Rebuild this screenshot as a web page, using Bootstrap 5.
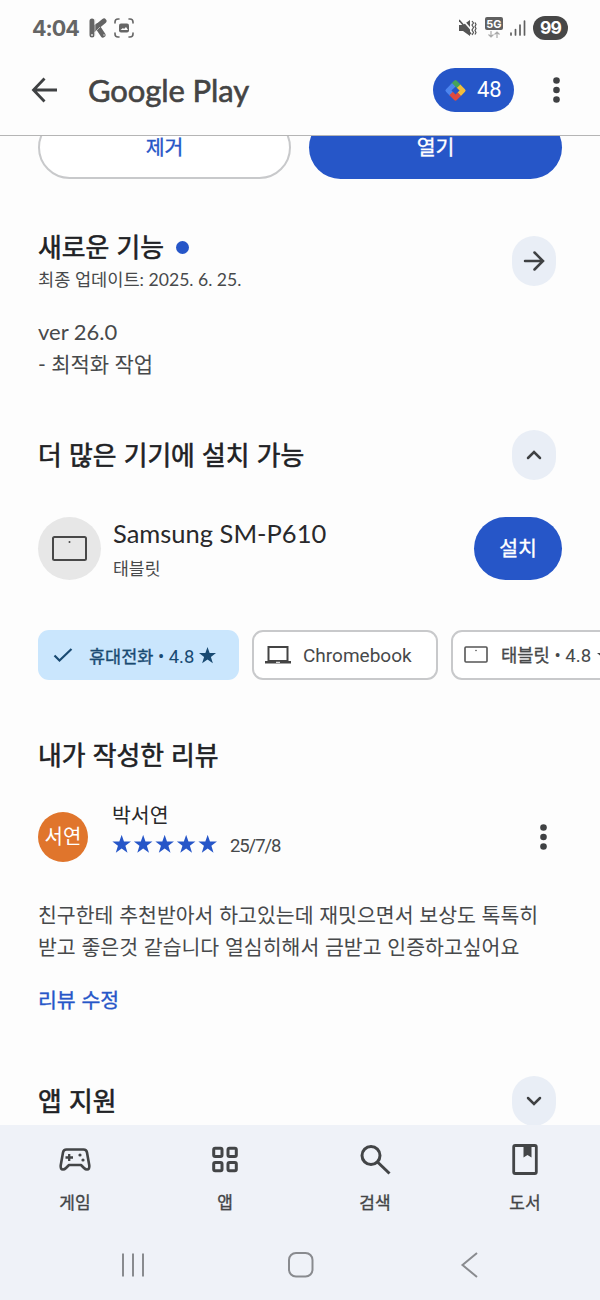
<!DOCTYPE html>
<html lang="ko">
<head>
<meta charset="utf-8">
<meta name="viewport" content="width=device-width, initial-scale=1">
<title>Google Play</title>
<link href="https://cdn.jsdelivr.net/npm/bootstrap@5.3.0/dist/css/bootstrap.min.css" rel="stylesheet">
<style>
  body { font-family: Roboto, "Noto Sans CJK KR", sans-serif; color: #47494b; background: #fdfdfd; height: 1300px; overflow: hidden; }
  .kr { font-family: "Noto Sans CJK KR", sans-serif; }
  .geo { font-family: Lato, "Noto Sans CJK KR", sans-serif; }
  svg { display: block; flex: none; }
  span, a, h1, h2, p { white-space: nowrap; }
  .status { height: 56px; padding: 0 32px; }
  .clock { font: 700 21.5px/30px Inter, sans-serif; color: #656565; letter-spacing: -1px; width: 57px; }
  .battery { width: 35px; height: 24px; background: #474747; font: 700 17.5px/24px Inter, sans-serif; letter-spacing: -.8px; margin-left: 7px; }
  .topbar { height: 80px; padding: 0 39px 11px 31px; border-bottom: 1.5px solid #b5b5b5; }
  .wordmark { font: 400 31px/40px Lato, sans-serif; letter-spacing: -.1px; color: #444; -webkit-text-stroke: .6px #444; width: 345px; margin-left: 31px; }
  .points { width: 81px; height: 44px; background: #2656c8; font-size: 22px; line-height: 44px; padding-left: 11px; }
  .content { height: 989px; padding: 0 38px; }
  .pill { height: 63px; border-radius: 32px; font-size: 20.5px; line-height: 60px; padding: 0 0 3px; border: 0; }
  .pill-outline { border: 2px solid #c8c9cb; color: #2656c8; -webkit-text-stroke: .35px; background: #fff; line-height: 56px; }
  .pill-blue { background: #2656c8; color: #fff; -webkit-text-stroke: .35px; }
  .heading { font-size: 25.8px; line-height: 32px; font-weight: 400; color: #202124; -webkit-text-stroke: .6px #202124; margin: 0; padding-bottom: 3px; }
  .fresh-dot { width: 13px; height: 13px; background: #2656c8; margin-left: 12px; }
  .round { width: 44px; height: 50px; border-radius: 22px; background: #e9eef6; margin-right: 6px; flex: none; }
  .body-text { font-size: 20.5px; line-height: 32px; margin: 0; }
  .device { width: 63px; height: 63px; background: #e7e7e7; }
  .chip { height: 50px; border: 2px solid #c8c9cb; border-radius: 11px; font-size: 19px; background: #fff; flex: none; }
  .chip > span { padding-top: 3px; }
  .chip-on { width: 201px; background: #cae6fd; color: #194a72; border: 0; padding-left: 15px; }
  .chips { margin: 50px -38px 0 0; gap: 13px; overflow: hidden; }
  .stroked { -webkit-text-stroke: .35px; }
  .avatar { width: 50px; height: 50px; background: #e0752c; font-size: 20px; line-height: 48px; }
  .bottom { height: 175px; background: #eff2f8; }
  .tab { padding-top: 17px; font-size: 17px; line-height: 24px; color: #434547; }
  .tab span { margin-top: 14px; }
  .sysnav { padding: 0 117px 0 119px; margin-top: 38px; }
</style>
</head>
<body>
<svg class="d-none"><defs>
  <path id="star" d="M12 2l2.500 7.200H22l-6 4.600 2.300 7.400-6.300-4.500-6.300 4.500L8 13.800 2 9.200h7.500z"/>
</defs></svg>

<header>
  <div class="status d-flex align-items-center justify-content-between">
    <div class="d-flex align-items-center">
      <span class="clock">4:04</span>
      <svg width="18" height="20" viewBox="0 0 18 20"><path d="M3 3v14M15 3L4 12M8 8l6 9" stroke="#646464" stroke-width="5" stroke-linecap="round"/><path d="M6 1v17M6 14l5-5" stroke="#ddd" stroke-width=".7"/><circle cx="3" cy="17" r="1" fill="#ddd"/><circle cx="15" cy="17" r=".8" fill="#ddd"/></svg>
      <svg style="margin-left:7px" width="20" height="20" viewBox="0 0 20 20" fill="none" stroke="#666" stroke-width="1.600" stroke-linecap="round"><path d="M1 5V4a3 3 0 013-3h1M15 1h1a3 3 0 013 3v1M19 15v1a3 3 0 01-3 3h-1M5 19H4a3 3 0 01-3-3v-1"/><rect x="5" y="5.500" width="10" height="9" rx="2" fill="#666" stroke="none"/><path d="M6.500 12l2.500-2 1 1 2-2 2 3z" fill="#fff" stroke="none"/></svg>
    </div>
    <div class="d-flex align-items-center">
      <svg width="18" height="18" viewBox="0 0 18 18"><path d="M0 6h4l7-5v16l-7-5H0z" fill="#555"/><path d="M2-1l14 16" stroke="#fdfdfd" stroke-width="1.600"/><path d="M0 1l12 14" stroke="#555" stroke-width="1.600"/><path d="M13 2l1.500 2L13 6l1.500 2.500L13 11l1.500 2.500L13 16M16 3.500l1 2-1 2 1 2-1 2 1 2-1 2" fill="none" stroke="#555" stroke-width="1.200"/></svg>
      <svg style="margin-left:7px" width="20" height="22" viewBox="0 0 20 22"><rect x="1" y="0" width="18" height="13" rx="2" fill="#606060"/><text x="10" y="10.500" text-anchor="middle" font-family="Inter" font-weight="700" font-size="11" fill="#fff">5G</text><path d="M7 14v6M4.500 17.500L7 20l2.500-2.500M13 21v-6M10.500 17.500L13 15l2.500 2.500" fill="none" stroke="#aaa" stroke-width="1.200"/></svg>
      <svg style="margin-left:5px" width="17" height="18" viewBox="0 0 17 18" stroke="#606060" stroke-width="1.700" stroke-linecap="round"><path d="M2 14v2M6.500 10.500V16M11 6v10M15.500 2v14"/></svg>
      <span class="battery rounded-pill text-white text-center">99</span>
    </div>
  </div>
  <div class="topbar d-flex align-items-center">
    <svg width="26" height="26" viewBox="0 0 26 26" fill="none" stroke="#3f4143" stroke-width="2.800"><path d="M13.500 1.500L2.500 13l11 11.500M2.500 13H26"/></svg>
    <span class="wordmark">Google Play</span>
    <div class="points rounded-pill text-white d-flex align-items-center">
      <svg width="23" height="23" viewBox="0 0 24 24"><g transform="rotate(45 12 12)"><path d="M4 6a2 2 0 012-2h8v5H9v3H4z" fill="#46a35a"/><path d="M4 9h5v6h3v5H6a2 2 0 01-2-2z" fill="#4c85ef"/><path d="M11 4h7a2 2 0 012 2v6h-5V9h-4z" fill="#f2bd3a"/><path d="M20 12v6a2 2 0 01-2 2h-7v-5h4v-3z" fill="#df4a3f"/><path d="M4 9V6a2 2 0 012-2h5v5z" fill="#46a35a"/></g></svg>
      <span style="margin-left:10px">48</span>
    </div>
    <svg style="margin-left:39px" width="7" height="26" viewBox="0 0 7 26" fill="#3f4143"><circle cx="3.500" cy="3.500" r="3.300"/><circle cx="3.500" cy="13" r="3.300"/><circle cx="3.500" cy="22.500" r="3.300"/></svg>
  </div>
</header>

<main class="content overflow-hidden">
  <div class="d-flex" style="margin-top:-20px;gap:18px">
    <button class="pill pill-outline kr flex-fill w-50">제거</button>
    <button class="pill pill-blue kr flex-fill w-50">열기</button>
  </div>

  <section class="d-flex justify-content-between" style="margin-top:52px">
    <div>
      <div class="d-flex align-items-center" style="height:33px"><h2 class="heading kr">새로운 기능</h2><i class="fresh-dot rounded-circle"></i></div>
      <span class="geo d-block" style="font-size:17.600px;line-height:32px">최종 업데이트: 2025. 6. 25.</span>
    </div>
    <a class="round d-flex align-items-center justify-content-center" style="margin-top:5px"><svg width="22" height="22" viewBox="0 0 22 22" fill="none" stroke="#3f4143" stroke-width="2.500" stroke-linecap="round"><path d="M2 11h17M11.500 2.500L20 11l-8.500 8.500"/></svg></a>
  </section>
  <p class="body-text geo" style="margin-top:20px;font-size:21px"><span style="font-size:22px">ver 26.0</span><br>- 최적화 작업</p>

  <section class="d-flex align-items-center justify-content-between" style="margin-top:50px">
    <h2 class="heading kr">더 많은 기기에 설치 가능</h2>
    <a class="round d-flex align-items-center justify-content-center"><svg width="16" height="10" viewBox="0 0 16 10" fill="none" stroke="#3f4143" stroke-width="2.500" stroke-linecap="round"><path d="M2 8l6-6 6 6"/></svg></a>
  </section>
  <div class="d-flex align-items-center" style="margin-top:37px;height:63px">
    <div class="device rounded-circle d-flex align-items-center justify-content-center"><svg width="36" height="26" viewBox="0 0 36 26"><rect x="1" y="1" width="33" height="23" rx="1.500" fill="none" stroke="#484848" stroke-width="2"/><circle cx="17.500" cy="6" r="1" fill="#484848"/></svg></div>
    <div class="flex-grow-1" style="margin-left:12px;padding-top:3px">
      <span class="geo d-block" style="font-size:25.500px;line-height:34px;color:#29292b">Samsung SM-P610</span>
      <span class="kr d-block" style="font-size:17.200px;line-height:35px">태블릿</span>
    </div>
    <button class="pill pill-blue kr" style="width:88px">설치</button>
  </div>

  <div class="chips d-flex">
    <div class="chip chip-on d-flex align-items-center">
      <svg width="20" height="16" viewBox="0 0 20 16" fill="none" stroke="#194a72" stroke-width="2.200"><path d="M1.500 8.500l5 5L18.500 2"/></svg>
      <span style="margin-left:16px;font-size:18.400px"><span class="stroked" style="font-size:17.500px">휴대전화</span> • 4.8</span>
      <svg style="margin-left:5px" width="17" height="17" viewBox="2 2 20 20" fill="#194a72"><use href="#star"/></svg>
    </div>
    <div class="chip d-flex align-items-center" style="width:186px;padding-left:11px">
      <svg width="26" height="20" viewBox="0 0 26 20"><rect x="3.500" y="2" width="19" height="14" fill="none" stroke="#444" stroke-width="2"/><path d="M0 16h26v2.500H0z" fill="#444"/><path d="M11 17.300h4" stroke="#fff"/></svg>
      <span style="margin-left:12px">Chromebook</span>
    </div>
    <div class="chip d-flex align-items-center" style="width:202px;padding-left:11px">
      <svg width="25" height="18" viewBox="0 0 25 18"><rect x="1" y="1" width="22" height="15" rx="1" fill="none" stroke="#555" stroke-width="1.600"/><circle cx="12" cy="4.500" r=".8" fill="#555"/></svg>
      <span style="margin-left:12px;font-size:18.600px"><span class="stroked" style="font-size:17.700px">태블릿</span> • 4.8</span>
      <svg style="margin-left:6px" width="17" height="17" viewBox="2 2 20 20" fill="#444"><use href="#star"/></svg>
    </div>
  </div>

  <h2 class="heading kr" style="margin-top:58px">내가 작성한 리뷰</h2>
  <div class="d-flex align-items-center" style="margin-top:25px;height:62px">
    <div class="avatar rounded-circle text-white text-center kr mt-3">서연</div>
    <div class="flex-grow-1" style="margin-left:24px">
      <span class="kr d-block" style="font-size:20.500px;line-height:31px;color:#29292b">박서연</span>
      <div class="d-flex align-items-center" style="height:30px">
        <svg width="107" height="20" viewBox="0 0 107 20" fill="#2656c8"><use href="#star" transform="translate(-1.500 -2) scale(.93)"/><use href="#star" transform="translate(20 -2) scale(.93)"/><use href="#star" transform="translate(41.500 -2) scale(.93)"/><use href="#star" transform="translate(63 -2) scale(.93)"/><use href="#star" transform="translate(84.500 -2) scale(.93)"/></svg>
        <span style="font-size:18.500px;letter-spacing:-1.100px;margin-left:11px;padding-top:5px">25/7/8</span>
      </div>
    </div>
    <svg style="margin:15px 15px 0 0" width="7" height="26" viewBox="0 0 7 26" fill="#3f4143"><circle cx="3.500" cy="3.500" r="3.300"/><circle cx="3.500" cy="13" r="3.300"/><circle cx="3.500" cy="22.500" r="3.300"/></svg>
  </div>
  <p class="body-text kr" style="margin-top:38px">친구한테 추천받아서 하고있는데 재밋으면서 보상도 톡톡히<br>받고 좋은것 같습니다 열심히해서 금받고 인증하고싶어요</p>
  <a class="body-text kr stroked d-block text-decoration-none" style="margin-top:21px;color:#2656c8">리뷰 수정</a>

  <section class="d-flex align-items-center justify-content-between" style="margin-top:61px">
    <h2 class="heading kr">앱 지원</h2>
    <a class="round d-flex align-items-center justify-content-center"><svg width="16" height="10" viewBox="0 0 16 10" fill="none" stroke="#3f4143" stroke-width="2.500" stroke-linecap="round"><path d="M2 2l6 6 6-6"/></svg></a>
  </section>
</main>

<footer class="bottom">
  <nav class="row g-0 text-center kr">
    <div class="tab col d-flex flex-column align-items-center"><svg width="34" height="34" viewBox="0 0 34 34" fill="none" stroke="#434547" stroke-width="2.600" stroke-linejoin="round"><path d="M8.500 7.500h17q3 0 3.500 3l2.300 13q.4 4-2.300 4-1.500 0-3-1.500L23 23H11l-3 3q-1.500 1.500-3 1.500-2.700 0-2.300-4l2.300-13q.500-3 3.500-3z"/><path d="M7.500 15.500h7.500M11.200 12v7" stroke-width="2.300"/><g fill="#434547" stroke="none"><circle cx="22" cy="13" r="1.600"/><circle cx="25" cy="18" r="1.600"/></g></svg><span class="stroked">게임</span></div>
    <div class="tab col d-flex flex-column align-items-center"><svg width="34" height="34" viewBox="0 0 34 34" fill="none" stroke="#434547" stroke-width="3"><rect x="5.700" y="6.200" width="8.300" height="8.300" rx="1.500"/><rect x="20" y="6.200" width="8.300" height="8.300" rx="1.500"/><rect x="5.700" y="20.500" width="8.300" height="8.300" rx="1.500"/><rect x="20" y="20.500" width="8.300" height="8.300" rx="1.500"/></svg><span class="stroked">앱</span></div>
    <div class="tab col d-flex flex-column align-items-center"><svg width="34" height="34" viewBox="0 0 34 34" fill="none" stroke="#434547" stroke-width="3"><circle cx="13" cy="13.500" r="9"/><path d="M19.500 20L31.500 31.500"/></svg><span class="stroked">검색</span></div>
    <div class="tab col d-flex flex-column align-items-center"><svg width="34" height="34" viewBox="0 0 34 34"><rect x="5.700" y="3.500" width="22.600" height="28" rx="1.500" fill="none" stroke="#434547" stroke-width="2.800"/><path d="M15.500 3h8v12.500l-4-2.500-4 2.500z" fill="#434547"/></svg><span class="stroked">도서</span></div>
  </nav>
  <div class="sysnav d-flex justify-content-between">
    <svg width="26" height="26" viewBox="0 0 26 26" stroke="#898b8f" stroke-width="2"><path d="M4 1.500v23M14 1.500v23M24 1.500v23"/></svg>
    <svg width="26" height="26" viewBox="0 0 26 26" fill="none" stroke="#898b8f" stroke-width="2"><rect x="1" y="1" width="23.500" height="23.500" rx="7"/></svg>
    <svg width="26" height="26" viewBox="0 0 26 26" fill="none" stroke="#898b8f" stroke-width="2"><path d="M20 1L5.500 13 20 25"/></svg>
  </div>
</footer>
<script src="https://cdn.jsdelivr.net/npm/bootstrap@5.3.0/dist/js/bootstrap.bundle.min.js"></script>
</body>
</html>
